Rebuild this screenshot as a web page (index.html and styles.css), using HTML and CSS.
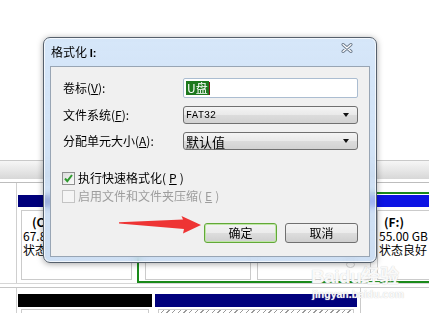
FILE: index.html
```html
<!DOCTYPE html>
<html lang="zh-CN">
<head>
	<meta charset="UTF-8">
	<title>格式化 I:</title>
	<link rel="stylesheet" href="styles.css">
</head>
<body>
	<div class="screen">
		<div class="blank"></div>
		<div class="band"></div>

		<div class="disk disk-1">
			<div class="disk-head"></div>
			<div class="disk-body">
				<div class="part part-c">
					<div class="bar bar-navy"></div>
					<div class="cell">
						<div class="cell-text">
							<div class="name">(C:)</div>
							<div>67.87 GB</div>
							<div>状态良好</div>
						</div>
					</div>
				</div>
				<div class="ext">
					<div class="part part-d">
						<div class="bar bar-blue"></div>
						<div class="cell"></div>
					</div>
					<div class="part part-e">
						<div class="bar bar-blue"></div>
						<div class="cell"></div>
					</div>
					<div class="part part-f">
						<div class="bar bar-blue"></div>
						<div class="cell">
							<div class="name">(F:)</div>
							<div>55.00 GB N</div>
							<div>状态良好</div>
						</div>
					</div>
				</div>
			</div>
		</div>

		<div class="disk disk-2">
			<div class="disk-head"></div>
			<div class="disk-body body-2">
				<div class="part part-free">
					<div class="bar bar-black"></div>
					<div class="cell cell-low"></div>
				</div>
				<div class="part part-i">
					<div class="bar bar-navy"></div>
					<div class="cell cell-low cell-hatch"></div>
				</div>
				<div class="sep"></div>
			</div>
		</div>
	</div>

	<div class="watermark">
		<div class="wm-logo">Bai<span class="wm-du">du<svg class="paw" width="16" height="14" viewBox="0 0 16 14"><g fill="none" stroke="#d0d0d0" stroke-width="1"><ellipse cx="3" cy="6" rx="2" ry="2.5"/><ellipse cx="6.5" cy="2.5" rx="2" ry="2.2"/><ellipse cx="10.5" cy="2.5" rx="2" ry="2.2"/><ellipse cx="13.5" cy="6" rx="2" ry="2.5"/><ellipse cx="8.5" cy="10.5" rx="4" ry="3"/></g></svg></span>经验</div>
		<div class="wm-url">jingyan.baidu.com</div>
	</div>

	<div class="dialog">
		<div class="title">
			<span class="title-text">格式化 <b>I:</b></span>
			<svg class="close" width="12" height="10" viewBox="0 0 12 10">
				<path d="M2 1.5 L10 8.5 M10 1.5 L2 8.5" stroke="#6c7b8c" stroke-width="3" stroke-linecap="round"/>
				<path d="M2 1.5 L10 8.5 M10 1.5 L2 8.5" stroke="#ffffff" stroke-width="1.2" stroke-linecap="round"/>
			</svg>
		</div>
		<div class="client">
			<div class="form">
				<label>卷标(<u>V</u>):</label>
				<div class="input"><span class="sel">U盘</span><span class="caret"></span></div>
				<label>文件系统(<u>F</u>):</label>
				<div class="select"><span class="mono">FAT32</span><i class="drop"></i></div>
				<label>分配单元大小(<u>A</u>):</label>
				<div class="select"><span class="big">默认值</span><i class="drop"></i></div>
			</div>
			<div class="checks">
				<div class="check">
					<span class="box">
						<svg width="11" height="11" viewBox="0 0 11 11"><path d="M2 5.5 L4.3 8.2 L9 2" fill="none" stroke="#2f9a2f" stroke-width="2"/></svg>
					</span>
					执行快速格式化(<u>P</u>)
				</div>
				<div class="check check-off">
					<span class="box"></span>
					启用文件和文件夹压缩(<u>E</u>)
				</div>
			</div>
			<div class="buttons">
				<button class="btn btn-default">确定</button>
				<button class="btn">取消</button>
			</div>
		</div>
	</div>

	<svg class="arrow" width="429" height="313" viewBox="0 0 429 313">
		<polygon points="119,222.3 183,219.6 181.5,216 201,225 183,233.5 184,229 119,223.4" fill="#ee3434"/>
	</svg>
</body>
</html>
```

FILE: styles.css
```css
body {
	margin: 0;
	width: 429px;
	height: 313px;
	overflow: hidden;
	position: relative;
	background: #fff;
	font-family: "Noto Sans CJK SC", "Liberation Sans", sans-serif;
	font-size: 12px;
	color: #000;
}

/* background: disk management */
.screen {
	width: 429px;
	height: 313px;
	overflow: hidden;
}
.blank {
	height: 160px;
}
.band {
	height: 18px;
	border-top: 1px solid #c9c9c9;
	background: linear-gradient(#f6f6f6, #e4e4e4 60%, #d7d7d7);
	margin-bottom: 3px;
}
.disk {
	display: flex;
}
.disk-1 {
	height: 100px;
	border-top: 1px solid #bdbdbd;
	border-bottom: 1px solid #d6d6d6;
	margin-bottom: 3px;
}
.disk-2 {
	height: 40px;
	border-top: 1px solid #c6c6c6;
}
.disk-head {
	width: 16px;
	flex-shrink: 0;
	border-right: 1px solid #cfcfcf;
}
.disk-body {
	display: flex;
	padding: 9px 0 0 1px;
	flex: 1;
	min-width: 0;
}
.body-2 {
	padding-top: 6px;
}
.part {
	flex-shrink: 0;
}
.part-c {
	width: 117px;
	padding-top: 3px;
	margin-right: 2px;
}
.bar {
	height: 12px;
}
.bar-navy {
	background: #00007c;
}
.bar-blue {
	background: #0d14e4;
}
.bar-black {
	height: 13px;
	background: #000;
}
.body-2 .bar-navy {
	height: 13px;
}
.cell {
	box-sizing: border-box;
	height: 70px;
	margin: 3px 3px 0;
	border: 1px solid #cbcbcb;
	padding: 4px 0 0 1px;
	line-height: 14px;
	white-space: nowrap;
	overflow: hidden;
}
.cell-text {
	width: 21px;
	overflow: hidden;
}
.name {
	font-weight: bold;
	padding-left: 9px;
}
.ext {
	box-sizing: border-box;
	width: 300px;
	height: 91px;
	flex-shrink: 0;
	display: flex;
	border: 2px solid #1a8a1a;
	padding: 1px 0 0 3px;
}
.part-d {
	width: 112px;
}
.part-e {
	width: 120px;
}
.part-f {
	flex: 1;
}
.part-f .name {
	padding-left: 5px;
}
.part-free {
	width: 134px;
	margin-right: 3px;
}
.part-i {
	width: 202px;
}
.cell-low {
	height: 20px;
	margin-top: 2px;
}
.cell-hatch {
	background: repeating-linear-gradient(135deg, #fff 0 3px, #9a9a9a 3px 4px);
}
.sep {
	width: 1px;
	margin: -6px 0 0 3px;
	background: #cacaca;
}

/* watermark */
.watermark {
	position: absolute;
	left: 311px;
	top: 257px;
	color: rgba(255, 255, 255, 0.92);
	text-shadow: 0 0 1px #c4c4c4;
	font-family: "Liberation Sans", sans-serif;
	font-weight: bold;
}
.wm-logo {
	font-size: 19px;
	line-height: 20px;
	padding-top: 10px;
	letter-spacing: -0.5px;
}
.wm-logo,
.wm-url {
	white-space: nowrap;
}
.wm-du {
	position: relative;
}
.paw {
	position: absolute;
	left: 3px;
	top: -12px;
}
.wm-url {
	font-size: 10.5px;
	line-height: 14px;
	padding-left: 1px;
}

/* dialog */
.dialog {
	position: absolute;
	left: 43px;
	top: 37px;
	width: 334px;
	height: 226px;
	box-sizing: border-box;
	padding: 0 6px 5px;
	border: 1px solid #56606c;
	border-radius: 7px;
	background: linear-gradient(rgba(208, 227, 248, 0.88), rgba(192, 214, 240, 0.78));
	backdrop-filter: blur(3px);
	box-shadow: 0 1px 6px rgba(0, 0, 0, 0.35), inset 0 0 0 1px rgba(255, 255, 255, 0.7);
}
.title {
	height: 28px;
	display: flex;
	align-items: center;
	padding-left: 1px;
}
.title-text {
	font-size: 12px;
	line-height: 14px;
}
.title-text b {
	font-family: "Liberation Sans", sans-serif;
	font-size: 11px;
}
.close {
	margin-left: auto;
	margin-right: 17px;
	align-self: flex-start;
	margin-top: 5px;
}
.client {
	box-sizing: border-box;
	height: 191px;
	border: 1px solid #98a5b4;
	background: #f0f0f0;
	padding: 11px 11px 13px;
	display: flex;
	flex-direction: column;
}
.form {
	display: grid;
	grid-template-columns: 121px 175px;
	grid-template-rows: 20px 18px 18px;
	row-gap: 8px;
	align-items: center;
}
.form label {
	padding-left: 1px;
	line-height: 14px;
}
.input {
	box-sizing: border-box;
	height: 20px;
	border: 1px solid #abbdd1;
	border-radius: 2px;
	background: #fff;
	padding-left: 2px;
	display: flex;
	align-items: center;
}
.sel {
	background: #1d781d;
	color: #fff;
	line-height: 14px;
	padding: 0 1px;
}
.caret {
	width: 1px;
	height: 13px;
	background: #7a1a1a;
}
.select {
	box-sizing: border-box;
	height: 18px;
	border: 1px solid #707070;
	border-radius: 3px;
	background: linear-gradient(#f4f4f4, #e9e9e9 50%, #dcdcdc 51%, #d2d2d2);
	padding: 0 8px 0 2px;
	display: flex;
	align-items: center;
}
.mono {
	font-family: "Liberation Mono", monospace;
	font-size: 10px;
}
.big {
	font-size: 13px;
	line-height: 15px;
}
.drop {
	margin-left: auto;
	width: 0;
	height: 0;
	border-left: 3.5px solid transparent;
	border-right: 3.5px solid transparent;
	border-top: 4px solid #111;
}
.checks {
	margin-top: 19px;
}
.check {
	height: 18px;
	display: flex;
	align-items: center;
	gap: 3px;
	line-height: 14px;
}
.box {
	box-sizing: border-box;
	width: 13px;
	height: 13px;
	border: 1px solid #8e8f8f;
	background: linear-gradient(135deg, #dcdcdc, #fbfbfb);
	display: flex;
	align-items: center;
	justify-content: center;
}
.check-off {
	color: #9d9d9d;
}
.check-off .box {
	border-color: #c4c4c4;
	background: #f5f5f5;
}
.buttons {
	margin-top: 18px;
	display: flex;
	justify-content: flex-end;
	gap: 8px;
}
.btn {
	box-sizing: border-box;
	width: 73px;
	height: 20px;
	margin: 0;
	padding: 0;
	border: 1px solid #707070;
	border-radius: 3px;
	background: linear-gradient(#f3f3f3, #ebebeb 50%, #dddddd 51%, #cfcfcf);
	font-family: "Noto Sans CJK SC", sans-serif;
	font-size: 12px;
	line-height: 16px;
	color: #000;
}
.btn-default {
	border-color: #62a838;
	box-shadow: inset 0 0 0 1px #bfe6a6;
}

.arrow {
	position: absolute;
	left: 0;
	top: 0;
	pointer-events: none;
}
```
